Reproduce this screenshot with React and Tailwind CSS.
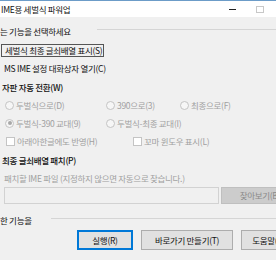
const Radio = ({ checked }) => (
  <span className="w-[9px] h-[9px] rounded-full border border-[#c4c4c4] bg-[#f6f6f6] flex items-center justify-center shrink-0">
    {checked && <span className="w-[4px] h-[4px] rounded-full bg-[#a8a8a8]" />}
  </span>
);

const Check = () => <span className="w-[9px] h-[9px] border border-[#c4c4c4] bg-white shrink-0" />;

const Row = ({ className = '', children }) => (
  <div className={`h-[12px] flex items-center leading-none whitespace-nowrap ${className}`}>{children}</div>
);

export default function App() {
  return (
    <div className="w-[276px] h-[260px] overflow-hidden bg-[#f0f0f0] text-[8.5px] tracking-[-0.3px] text-[#111] font-['Noto_Sans_CJK_KR','Noto_Sans',sans-serif] flex flex-col">
      {/* title bar */}
      <div className="h-[17px] shrink-0 bg-white border-t border-[#6c9cc8] flex items-center leading-none">
        <span className="flex-1 pl-[1px] whitespace-nowrap">IME용 세벌식 파워업</span>
        <div className="w-[28px] flex justify-center">
          <span className="w-[7px] h-px bg-[#222]" />
        </div>
        <div className="w-[28px] flex justify-center">
          <span className="w-[8px] h-[7px] border border-[#c8c8c8]" />
        </div>
        <div className="w-[2px]" />
      </div>

      {/* group header */}
      <Row className="mt-[8px]">
        <span>는 기능을 선택하세요</span>
        <span className="ml-[26px] flex-1 self-start mt-[4px] border-t border-[#d5d5d5]" />
      </Row>

      <div className="mt-[7px] ml-[1px] w-[103px] h-[13px] border border-[#555] flex items-center pl-[3px] leading-none whitespace-nowrap">
        세벌식 최종 글쇠배열 표시(S)
      </div>

      <Row className="mt-[5px] pl-[4px]">MS IME 설정 대화상자 열기(C)</Row>
      <Row className="mt-[7px] pl-[2px] font-medium">자판 자동 전환(W)</Row>

      <div className="mt-[6px] h-[12px] pl-[5px] grid grid-cols-[101px_74px_1fr] items-center leading-none whitespace-nowrap text-[#a0a0a0]">
        <span className="flex items-center gap-[2px]"><Radio />두벌식으로(D)</span>
        <span className="flex items-center gap-[2px]"><Radio />390으로(3)</span>
        <span className="flex items-center gap-[2px]"><Radio />최종으로(F)</span>
      </div>
      <div className="mt-[6px] h-[12px] pl-[5px] grid grid-cols-[101px_1fr] items-center leading-none whitespace-nowrap text-[#a0a0a0]">
        <span className="flex items-center gap-[2px]"><Radio checked />두벌식-390 교대(9)</span>
        <span className="flex items-center gap-[2px]"><Radio />두벌식-최종 교대(I)</span>
      </div>
      <div className="mt-[6px] h-[12px] pl-[6px] grid grid-cols-[127px_1fr] items-center leading-none whitespace-nowrap text-[#a0a0a0]">
        <span className="flex items-center gap-[2px]"><Check />아래아한글에도 반영(H)</span>
        <span className="flex items-center gap-[2px]"><Check />꼬마 윈도우 표시(L)</span>
      </div>

      <Row className="mt-[7px] pl-[2px] font-medium">최종 글쇠배열 패치(P)</Row>
      <Row className="mt-[6px] pl-[4px] text-[#a0a0a0]">패치할 IME 파일 (지정하지 않으면 자동으로 찾습니다.)</Row>

      <div className="mt-[3px] h-[17px] flex gap-[2px] pl-[4px] overflow-hidden">
        <div className="w-[215px] shrink-0 border border-[#d2d2d2] bg-[#f0f0f0]" />
        <div className="w-[84px] shrink-0 border border-[#bfbfbf] bg-[#cccccc] text-[#8a8a8a] flex items-center justify-center leading-none whitespace-nowrap">
          찾아보기(B)...
        </div>
      </div>

      <Row className="mt-[10px]">
        <span>한 기능을</span>
        <span className="ml-[19px] flex-1 self-start mt-[4px] border-t border-[#d5d5d5]" />
      </Row>

      <div className="mt-[4px] h-[20px] flex gap-[8px] pl-[77px] overflow-hidden leading-none whitespace-nowrap">
        <div className="w-[56px] shrink-0 border-2 border-[#0078d7] bg-[#e1e1e1] flex items-center justify-center">실행(R)</div>
        <div className="w-[92px] shrink-0 border border-[#adadad] bg-[#e1e1e1] flex items-center justify-center">바로가기 만들기(T)</div>
        <div className="w-[56px] shrink-0 border border-[#adadad] bg-[#e1e1e1] flex items-center justify-center">도움말(H)</div>
      </div>
    </div>
  );
}
